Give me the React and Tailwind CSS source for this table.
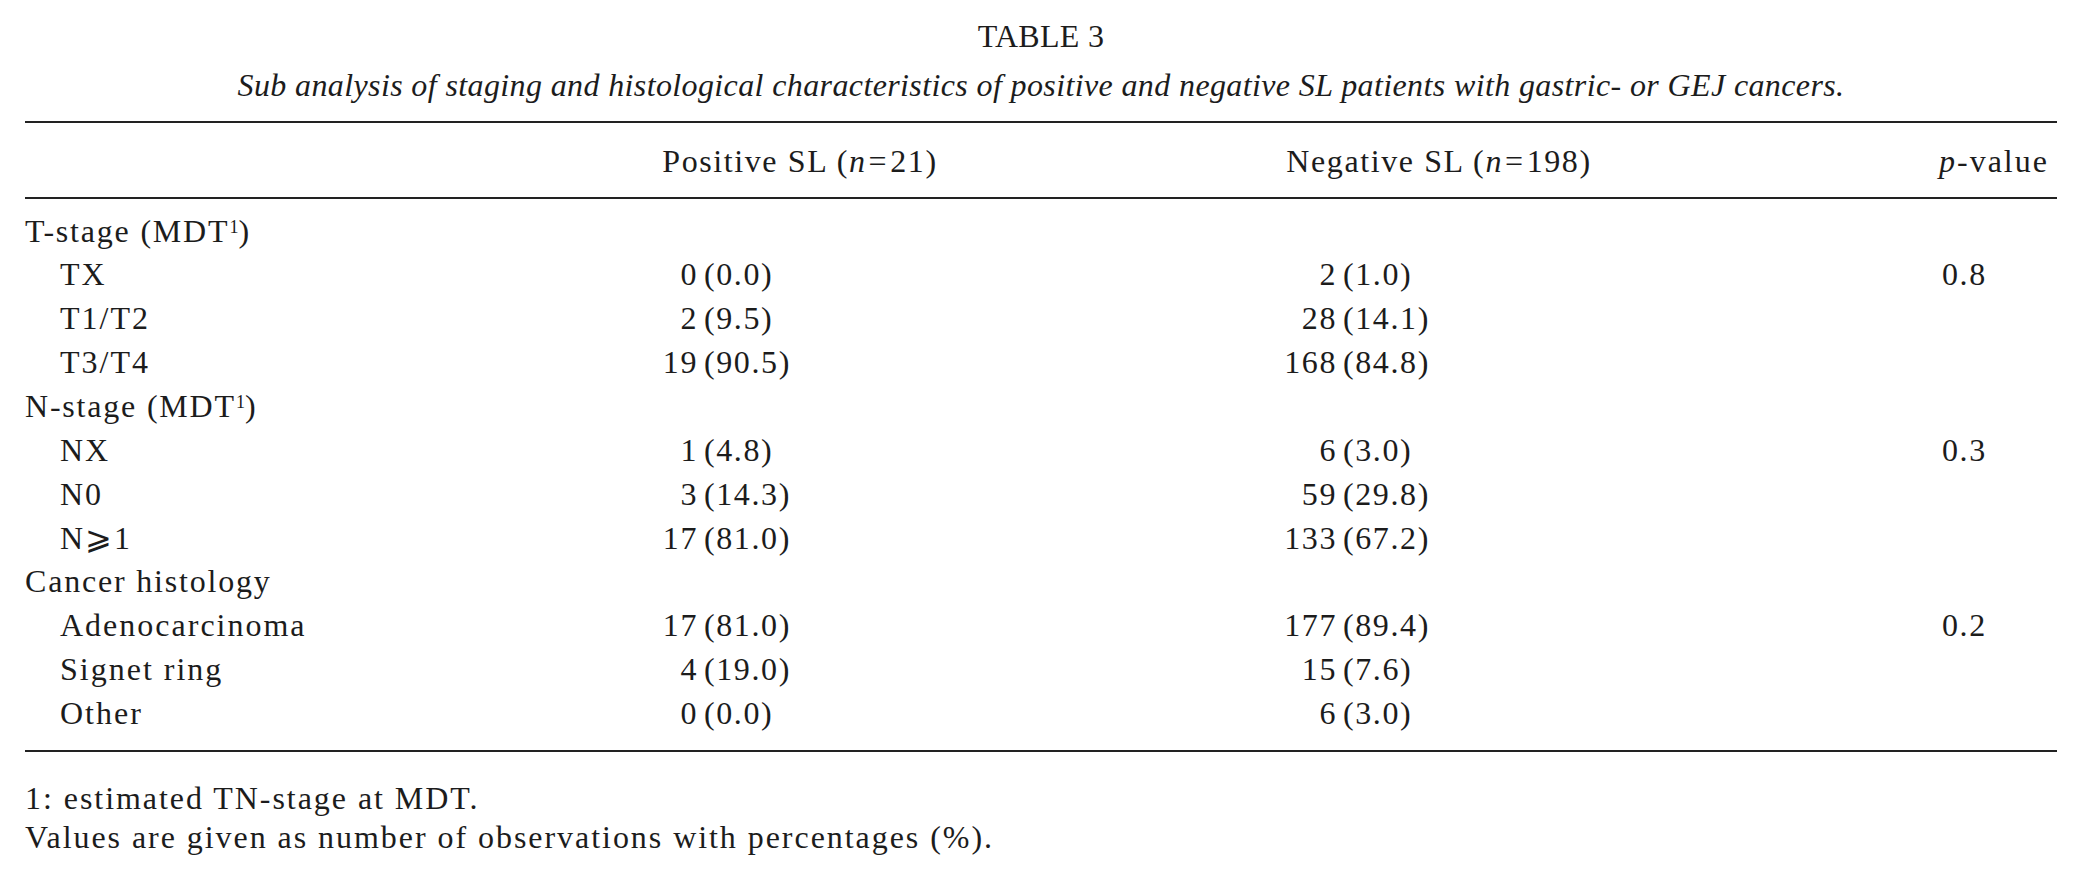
const rows = [
  { label: "T-stage (MDT", sup: "1", group: true },
  { label: "TX", pos: ["0", "0.0"], neg: ["2", "1.0"], p: "0.8" },
  { label: "T1/T2", pos: ["2", "9.5"], neg: ["28", "14.1"] },
  { label: "T3/T4", pos: ["19", "90.5"], neg: ["168", "84.8"] },
  { label: "N-stage (MDT", sup: "1", group: true },
  { label: "NX", pos: ["1", "4.8"], neg: ["6", "3.0"], p: "0.3" },
  { label: "N0", pos: ["3", "14.3"], neg: ["59", "29.8"] },
  { label: "N\u2A7E1", pos: ["17", "81.0"], neg: ["133", "67.2"] },
  { label: "Cancer histology", group: true },
  { label: "Adenocarcinoma", pos: ["17", "81.0"], neg: ["177", "89.4"], p: "0.2" },
  { label: "Signet ring", pos: ["4", "19.0"], neg: ["15", "7.6"] },
  { label: "Other", pos: ["0", "0.0"], neg: ["6", "3.0"] },
];

const Value = ({ v, numWidth }) =>
  v ? (
    <div className="flex">
      <span className={`${numWidth} text-right`}>{v[0]}</span>
      <span className="ml-[6px]">({v[1]})</span>
    </div>
  ) : null;

const App = () => {
  return (
    <div
      className="min-h-screen w-[2082px] bg-white px-[25px] text-[32px] tracking-[1.6px] text-[#1c1c1c]"
      style={{ fontFamily: '"Liberation Serif", "DejaVu Serif", serif' }}
    >
      <div className="pt-[12px] text-center leading-[49px]">
        <p className="tracking-[0.3px]">TABLE 3</p>
        <p className="italic tracking-[0.38px]">
          Sub analysis of staging and histological characteristics of positive and negative SL
          patients with gastric- or GEJ cancers.
        </p>
      </div>

      <div className="mt-[11px] border-y-2 border-[#222]">
        <div className="grid grid-cols-[560px_430px_848px_1fr] border-b-2 border-[#222] pt-[17px] pb-[13px] leading-[43.6px]">
          <div />
          <div className="text-center">
            Positive SL (<i>n</i>
            <span className="mx-[2px]">=</span>21)
          </div>
          <div className="text-center">
            Negative SL (<i>n</i>
            <span className="mx-[2px]">=</span>198)
          </div>
          <div className="pl-[76px] tracking-[2px]">
            <i>p</i>-value
          </div>
        </div>

        <div className="pt-[11px] pb-[14px] leading-[43.85px]">
          {rows.map((row, i) => (
            <div key={i} className="grid grid-cols-[560px_430px_848px_1fr]">
              <div className={row.group ? "tracking-[1.8px]" : "pl-[35px] tracking-[2px]"}>
                {row.label}
                {row.sup && (
                  <>
                    <sup className="text-[18px] tracking-normal">{row.sup}</sup>)
                  </>
                )}
              </div>
              <Value v={row.pos} numWidth="w-[113px]" />
              <Value v={row.neg} numWidth="w-[322px]" />
              <div className="pl-[79px]">{row.p}</div>
            </div>
          ))}
        </div>
      </div>

      <div className="pt-[27px] leading-[39px] tracking-[1.95px]">
        <p>1: estimated TN-stage at MDT.</p>
        <p>Values are given as number of observations with percentages (%).</p>
      </div>
    </div>
  );
};

export default App;
